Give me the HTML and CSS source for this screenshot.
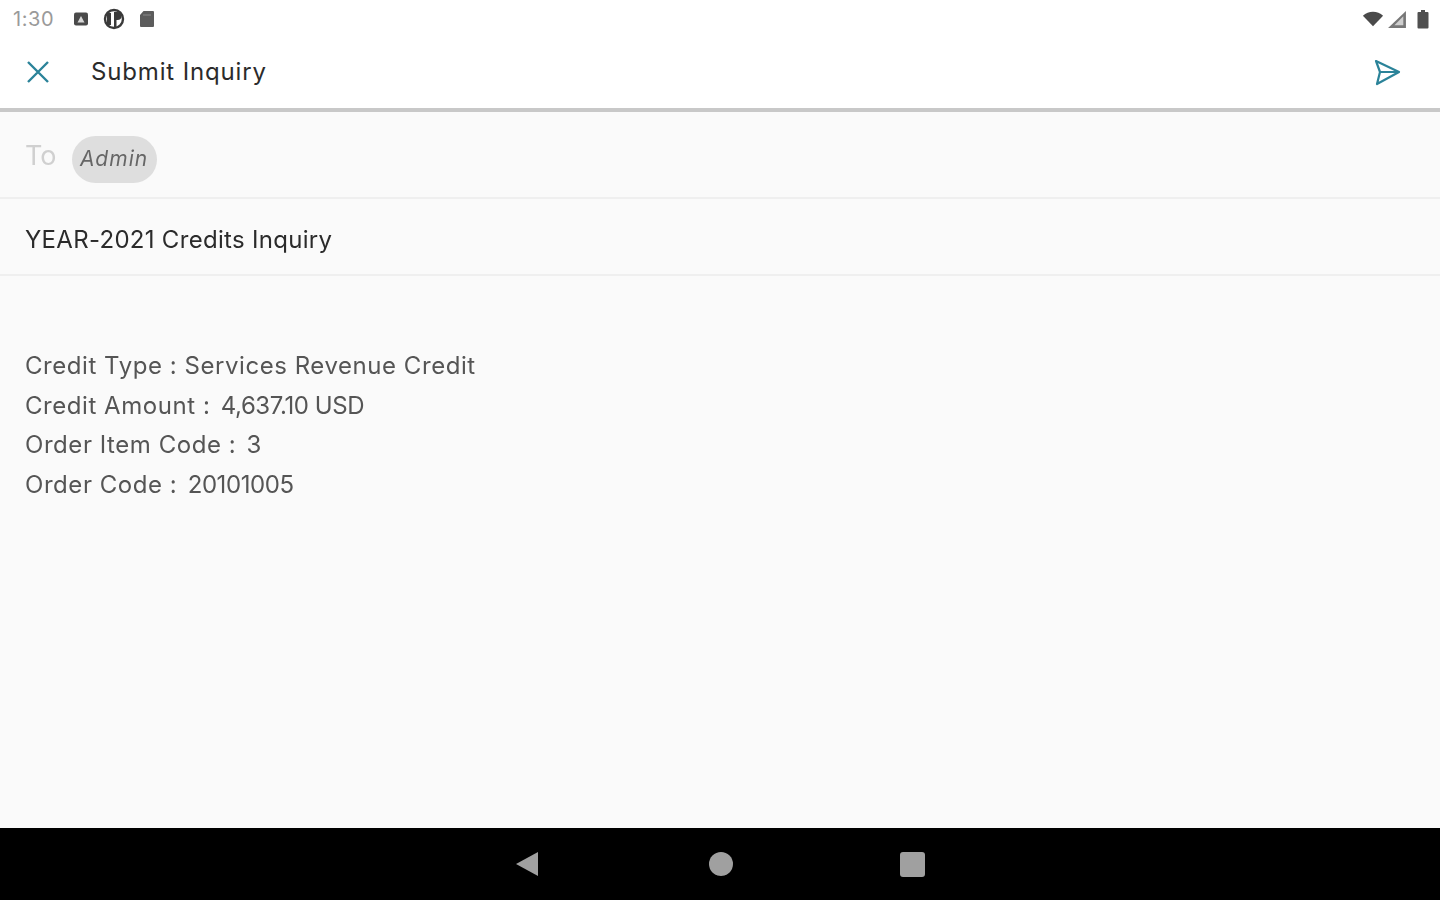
FILE: index.html
```html
<!DOCTYPE html>
<html lang="en">
<head>
    <meta charset="UTF-8">
    <meta name="viewport" content="width=device-width, initial-scale=1.0">
    <title>Submit Inquiry</title>
    <link rel="stylesheet" href="styles.css">
</head>
<body>
    <div class="status-bar">
        <div class="status-left">
            <span class="clock">1:30</span>
            <svg class="status-icon" width="16" height="16" viewBox="0 0 16 16"><rect x="1" y="1.5" width="14" height="13" rx="2" fill="#4a4a4a"/><path d="M4.500 11.500 8 5l3.500 6.500z" fill="#d8d8d8"/></svg>
            <svg class="status-icon" width="22" height="22" viewBox="0 0 22 22"><circle cx="11" cy="11" r="9" fill="none" stroke="#3a3a3a" stroke-width="2.4"/><rect x="4" y="5" width="4" height="12" fill="#3a3a3a"/><path d="M11 4h3.500a4 4 0 0 1 0 8H11z" fill="#3a3a3a"/><rect x="11" y="12" width="2.5" height="7" fill="#3a3a3a"/></svg>
            <svg class="status-icon" width="16" height="18" viewBox="0 0 16 18"><path d="M4.500 1H14a1 1 0 0 1 1 1v14a1 1 0 0 1-1 1H2a1 1 0 0 1-1-1V5z" fill="#5c5c5c"/><path d="M4 5h8" stroke="#8a8a8a"/></svg>
        </div>
        <div class="status-right">
            <svg width="22" height="18" viewBox="0 0 24 18"><path d="M1 5.500C4 2.500 8 1 12 1s8 1.500 11 4.500L12 17z" fill="#4a4a4a"/></svg>
            <svg class="signal" width="21" height="19" viewBox="0 0 20 18"><path d="M19 1v16H2z" fill="#777"/><path d="M16.500 6v8.500H8z" fill="#cfcfcf"/></svg>
            <svg width="12" height="20" viewBox="0 0 12 20"><path d="M4 1h4v2h2.500a1 1 0 0 1 1 1v14.500a1 1 0 0 1-1 1h-9a1 1 0 0 1-1-1V4a1 1 0 0 1 1-1H4z" fill="#4f4f4f"/></svg>
        </div>
    </div>

    <header class="app-bar">
        <svg class="close-icon" width="24" height="24" viewBox="0 0 24 24"><path d="M2 2 22 22M22 2 2 22" stroke="#2b8399" stroke-width="2.400" fill="none"/></svg>
        <h1 class="title">Submit Inquiry</h1>
        <svg class="send-icon" width="28" height="28" viewBox="0 0 28 28"><path d="M3 3 26 14 4 26l3-12zM7 14h19" stroke="#2b8399" stroke-width="2.200" fill="none" stroke-linejoin="round"/></svg>
    </header>

    <main class="form">
        <div class="to-row">
            <span class="to-label">To</span>
            <span class="chip">Admin</span>
        </div>
        <div class="subject-row">YEAR-2021 Credits Inquiry</div>
        <div class="message">
            <p>Credit Type : Services Revenue Credit</p>
            <p>Credit Amount : <span class="num">4,637.10 USD</span></p>
            <p>Order Item Code : <span class="num">3</span></p>
            <p>Order Code : <span class="num">20101005</span></p>
        </div>
    </main>

    <nav class="nav-bar">
        <svg class="nav-back" width="26" height="26" viewBox="0 0 26 26"><path d="M24 1v24L2 13z" fill="#a0a0a0"/></svg>
        <span class="nav-circle"></span>
        <span class="nav-square"></span>
    </nav>
</body>
</html>
```

FILE: styles.css
```css
* {
    margin: 0;
    padding: 0;
    box-sizing: border-box;
    font-family: 'Inter', 'Open Sans', sans-serif;
}

html, body {
    height: 100%;
}

body {
    width: 1440px;
    height: 900px;
    overflow: hidden;
    background-color: #fafafa;
    display: flex;
    flex-direction: column;
    filter: blur(0.5px);
}

.status-bar {
    height: 38px;
    background-color: #ffffff;
    display: flex;
    justify-content: space-between;
    align-items: center;
    padding: 0 11px 0 13px;
    flex-shrink: 0;
}

.status-left {
    display: flex;
    align-items: center;
}

.status-right {
    display: flex;
    align-items: center;
    gap: 2px;
}

.signal {
    margin-right: 8px;
}

.clock {
    font-size: 20px;
    letter-spacing: 0.6px;
    color: #9a9a9a;
    width: 60px;
}

.status-icon {
    margin-right: 14px;
}

.app-bar {
    height: 74px;
    background-color: #ffffff;
    border-bottom: 4px solid #c8c8c8;
    display: flex;
    align-items: center;
    padding: 0 39px 3px 26px;
    flex-shrink: 0;
}

.title {
    font-size: 24px;
    font-weight: 400;
    letter-spacing: 0.85px;
    color: #2b2b2b;
    margin-left: 41px;
    flex: 1;
}

.form {
    flex: 1;
}

.to-row {
    height: 87px;
    border-bottom: 2px solid #efefef;
    display: flex;
    align-items: center;
    padding: 10px 24px 0;
}

.to-label {
    font-size: 27px;
    color: #d0d0d0;
    margin: 0 15px 8px 1px;
}

.chip {
    width: 85px;
    height: 47px;
    border-radius: 24px;
    background-color: #dedede;
    font-size: 21px;
    font-style: italic;
    letter-spacing: 1px;
    color: #666;
    display: flex;
    align-items: center;
    justify-content: center;
    padding-bottom: 2px;
}

.subject-row {
    height: 77px;
    border-bottom: 2px solid #efefef;
    display: flex;
    align-items: center;
    padding: 6px 25px 0;
    font-size: 24px;
    letter-spacing: 0.3px;
    color: #2b2b2b;
}

.message {
    padding: 70px 25px 0;
    font-size: 24px;
    letter-spacing: 0.55px;
    line-height: 39.500px;
    color: #555;
}

.num {
    letter-spacing: -0.4px;
    margin-left: 3px;
}

.nav-bar {
    height: 72px;
    background-color: #000000;
    display: flex;
    align-items: center;
    justify-content: center;
    flex-shrink: 0;
}

.nav-back {
    margin-right: 169px;
    margin-left: -2px;
}

.nav-circle {
    width: 24px;
    height: 24px;
    border-radius: 50%;
    background-color: #a0a0a0;
    margin-right: 167px;
}

.nav-square {
    width: 25px;
    height: 25px;
    border-radius: 3px;
    background-color: #a0a0a0;
}
```
